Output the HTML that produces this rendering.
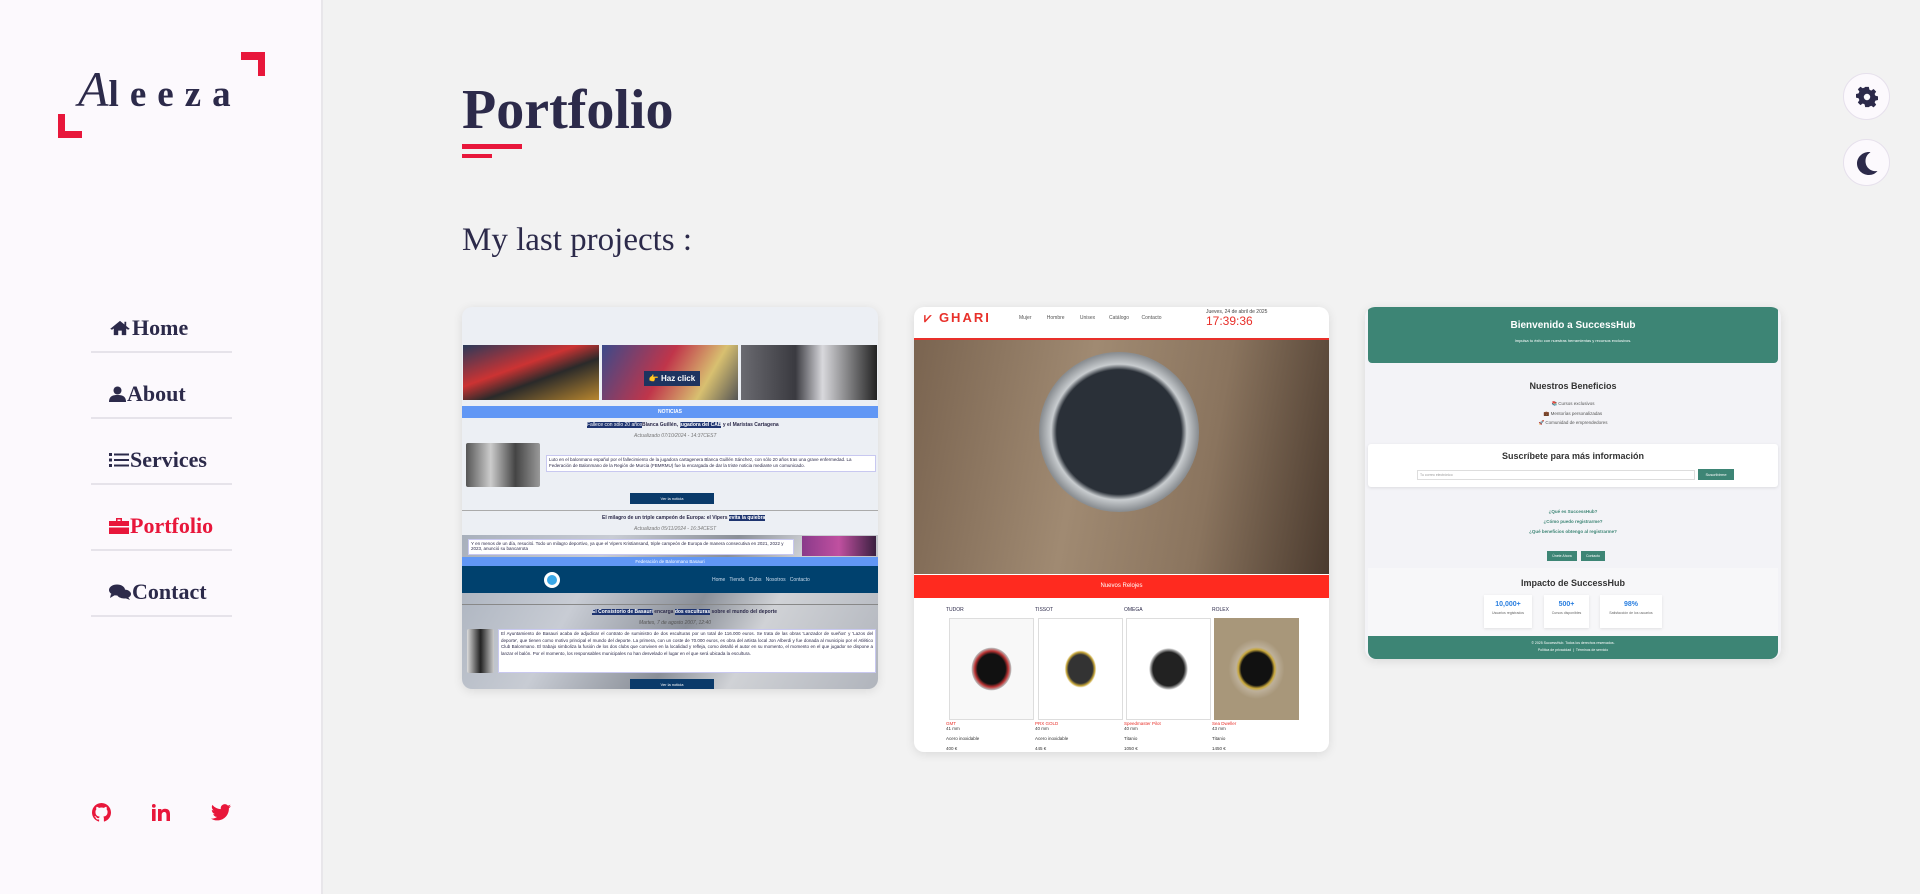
<!DOCTYPE html>
<html><head><meta charset="utf-8">
<style>
*{margin:0;padding:0;box-sizing:border-box}
body{width:1920px;height:894px;overflow:hidden;background:#f2f2f2;font-family:"Liberation Sans",sans-serif;position:relative;color:#2c2a4a}
.side{position:absolute;left:0;top:0;width:323px;height:894px;background:#fcf9fd;border-right:2px solid #e8e6ea}
.br{position:absolute;background:#e8173b}
.logo{position:absolute;left:78px;top:64px;height:50px;font-family:"Liberation Serif",serif;color:#2c2a4a;font-size:37px;font-weight:bold;letter-spacing:11px;white-space:nowrap;line-height:50px}
.logo i{font-weight:normal;font-size:50px;letter-spacing:0;margin-right:0}
.nav{position:absolute;left:91px;width:141px;height:66px;border-bottom:2px solid #e6e3ea;font-family:"Liberation Serif",serif;font-weight:bold;font-size:22px;color:#2c2a4a}
.nav span{position:absolute;left:18px;bottom:10px;display:flex;align-items:center;gap:1px;white-space:nowrap}
.nav svg{fill:currentColor}
h1{position:absolute;left:462px;top:78px;font-family:"Liberation Serif",serif;font-size:56px;font-weight:bold;color:#2c2a4a}
.bar{position:absolute;background:#e8173b;left:462px}
.sub{position:absolute;left:462px;top:222px;font-family:"Liberation Serif",serif;font-size:33px;color:#2c2a4a}
.circ{position:absolute;left:1843px;width:47px;height:47px;border-radius:50%;background:#fcf9fd;border:1px solid #e6e0ec;display:flex;align-items:center;justify-content:center}
.card{position:absolute;top:307px;border-radius:10px;overflow:hidden;box-shadow:0 2px 10px rgba(0,0,0,.1)}
.t{position:absolute;font-size:5px;white-space:nowrap}
</style></head><body>
<div class="side">
  <div class="br" style="left:241px;top:52px;width:24px;height:8px"></div>
  <div class="br" style="left:258px;top:52px;width:7px;height:24px"></div>
  <div class="br" style="left:58px;top:114px;width:7px;height:24px"></div>
  <div class="br" style="left:58px;top:131px;width:24px;height:7px"></div>
  <div class="logo"><i>A</i>leeza</div>

  <div class="nav" style="top:287px"><span><svg width="22" height="16" viewBox="0 0 24 18"><path d="M12 1 L1 10 L3 11 L5 9.5 V17 H10 V12 H14 V17 H19 V9.5 L21 11 L23 10 L19 6.7 V2 H17 V5 Z"/></svg>Home</span></div>
  <div class="nav" style="top:353px"><span><svg width="17" height="16" viewBox="0 0 17 16"><circle cx="8.5" cy="4.5" r="4"/><path d="M0 16 C0 10 4 9 8.5 9 C13 9 17 10 17 16Z"/></svg>About</span></div>
  <div class="nav" style="top:419px"><span><svg width="20" height="14" viewBox="0 0 20 14"><rect x="0" y="0" width="3" height="3"/><rect x="0" y="5.5" width="3" height="3"/><rect x="0" y="11" width="3" height="3"/><rect x="5" y=".5" width="15" height="2"/><rect x="5" y="6" width="15" height="2"/><rect x="5" y="11.5" width="15" height="2"/></svg>Services</span></div>
  <div class="nav" style="top:485px;color:#e8173b"><span><svg width="20" height="16" viewBox="0 0 20 16"><path d="M7 0 H13 V3 H20 V16 H0 V3 H7 Z M8.5 1.5 V3 H11.5 V1.5Z"/><rect x="0" y="8" width="20" height="1.5" fill="#fcf9fd"/></svg>Portfolio</span></div>
  <div class="nav" style="top:551px"><span><svg width="22" height="16" viewBox="0 0 22 16"><ellipse cx="8" cy="6" rx="8" ry="5.5"/><path d="M2 10 L1 14 L6 11Z"/><ellipse cx="15" cy="10" rx="7" ry="4.5"/><path d="M19 13 L21 16 L16 14Z"/></svg>Contact</span></div>

  <svg style="position:absolute;left:92px;top:803px" width="19" height="19" viewBox="0 0 16 16" fill="#e8173b"><path d="M8 0C3.6 0 0 3.6 0 8c0 3.5 2.3 6.5 5.5 7.6.4.1.5-.2.5-.4v-1.4c-2.2.5-2.7-1-2.7-1-.4-.9-.9-1.2-.9-1.2-.7-.5.1-.5.1-.5.8.1 1.2.8 1.2.8.7 1.2 1.9.9 2.3.7.1-.5.3-.9.5-1.1-1.8-.2-3.6-.9-3.6-4 0-.9.3-1.6.8-2.1-.1-.2-.4-1 .1-2.1 0 0 .7-.2 2.2.8.6-.2 1.3-.3 2-.3s1.4.1 2 .3c1.5-1 2.2-.8 2.2-.8.4 1.1.2 1.900.1 2.1.5.6.8 1.3.8 2.1 0 3.1-1.9 3.8-3.6 4 .3.3.5.8.5 1.5v2.2c0 .2.1.5.6.4C13.7 14.5 16 11.5 16 8c0-4.4-3.6-8-8-8z"/></svg>
  <svg style="position:absolute;left:152px;top:804px" width="18" height="17" viewBox="0 0 18 17" fill="#e8173b"><rect x="0" y="5" width="3.6" height="12"/><circle cx="1.8" cy="1.9" r="1.9"/><path d="M6 5 H9.4 V6.7 C10 5.6 11.3 4.8 13 4.8 C16.4 4.8 18 6.7 18 10.3 V17 H14.5 V11 C14.5 9.2 13.9 8 12.3 8 C10.6 8 9.7 9.2 9.7 11 V17 H6Z"/></svg>
  <svg style="position:absolute;left:211px;top:804px" width="20" height="17" viewBox="0 0 24 20" fill="#e8173b"><path d="M24 2.4c-.9.4-1.8.6-2.8.8 1-.6 1.8-1.6 2.200-2.700-1 .6-2 1-3.1 1.2C19.3.7 18 0 16.6 0c-2.7 0-4.9 2.2-4.9 4.9 0 .4 0 .8.1 1.1C7.7 5.8 4.1 3.9 1.7.9c-.4.7-.7 1.6-.7 2.5 0 1.7.9 3.2 2.2 4.1-.8 0-1.6-.2-2.2-.6v.1c0 2.4 1.7 4.4 3.9 4.8-.4.1-.8.2-1.3.2-.3 0-.6 0-.9-.1.6 2 2.4 3.4 4.6 3.4-1.7 1.3-3.8 2.1-6.1 2.1-.4 0-.8 0-1.2-.1 2.2 1.4 4.8 2.2 7.5 2.200 9.1 0 14-7.5 14-14v-.6c1-.7 1.8-1.6 2.5-2.5z"/></svg>
</div>

<h1>Portfolio</h1>
<div class="bar" style="top:144px;width:60px;height:5px"></div>
<div class="bar" style="top:154px;width:30px;height:4px"></div>
<div class="sub">My last projects :</div>

<div class="circ" style="top:73px"><svg width="22" height="22" viewBox="0 0 24 24"><path fill="#2c2a4a" fill-rule="evenodd" d="M10 1h4l.6 3 2 1 2.6-1.7 2.8 2.8L20.3 8.7l.9 2 2.8.6v4l-2.8.6-.9 2 1.7 2.6-2.8 2.8-2.6-1.7-2 .9L14 23h-4l-.6-3-2-.9-2.6 1.7L2 18l1.7-2.6-.9-2L0 12.7v-4l2.8-.6.9-2L2 3.6 4.8.8 7.4 2.5l2-.9z M12 8.5a3.5 3.5 0 1 0 0 7 3.5 3.5 0 1 0 0-7z"/></svg></div>
<div class="circ" style="top:139px"><svg width="22" height="24" viewBox="0 0 22 24"><path fill="#2c2a4a" d="M13 1C6.5 1 1 6 1 12.5S6.5 24 13 24c3.5 0 6.5-1.5 8.5-4-6.5 1-12-3.5-12-10C9.5 6 11.5 3 14.5 1.2 14 1 13.5 1 13 1z"/></svg></div>

<!-- Card 1 -->
<div class="card" style="left:462px;width:416px;height:382px;background:#eceff4">
  <div style="position:absolute;left:1px;top:38px;width:136px;height:55px;background:linear-gradient(160deg,#2a3a5a,#c33 40%,#2a2a2a 60%,#b8862e)"></div>
  <div style="position:absolute;left:140px;top:38px;width:136px;height:55px;background:linear-gradient(120deg,#3c4a8a,#c0354a 45%,#d8c070 75%,#555)"></div>
  <div style="position:absolute;left:279px;top:38px;width:136px;height:55px;background:linear-gradient(90deg,#6a6a70,#3a3a40 40%,#d8d8dc 60%,#222)"></div>
  <div style="position:absolute;left:182px;top:64px;width:56px;height:15px;background:#1e3460;color:#fff;font-size:8px;font-weight:bold;text-align:center;line-height:15px">👉 Haz click</div>
  <div style="position:absolute;left:0;top:99px;width:416px;height:12px;background:#6197f5;color:#fff;font-size:5px;font-weight:bold;text-align:center;line-height:12px">NOTICIAS</div>
  <div class="t" style="left:125px;top:115px;background:#1e3470;color:#fff">Fallece con sólo 20 años</div>
  <div class="t" style="left:180px;top:115px;font-weight:bold">Blanca Guillén, <span style="background:#1e3470;color:#fff">jugadora del CAB</span> y el Maristas Cartagena</div>
  <div class="t" style="left:172px;top:126px;color:#777;font-style:italic">Actualizado 07/10/2024 - 14:37CEST</div>
  <div style="position:absolute;left:4px;top:136px;width:74px;height:44px;background:linear-gradient(90deg,#555,#ccc,#444,#999);border-radius:2px"></div>
  <div style="position:absolute;left:84px;top:148px;width:330px;height:17px;background:#fff;border:1px solid #c8c8f0;font-size:4.5px;line-height:6px;padding:1px 2px;overflow:hidden">Luto en el balonmano español por el fallecimiento de la jugadora cartagenera Blanca Guillén Sánchez, con sólo 20 años tras una grave enfermedad. La Federación de Balonmano de la Región de Murcia (FBMRMU) fue la encargada de dar la triste noticia mediante un comunicado.</div>
  <div style="position:absolute;left:168px;top:186px;width:84px;height:11px;background:#0a3a6a;color:#fff;font-size:4px;text-align:center;line-height:11px">Ver la noticia</div>
  <div style="position:absolute;left:0;top:203px;width:416px;height:1px;background:#aaa"></div>
  <div class="t" style="left:140px;top:208px;font-weight:bold">El milagro de un triple campeón de Europa: el Vipers <span style="background:#1e3470;color:#fff">evita la quiebra</span></div>
  <div class="t" style="left:172px;top:219px;color:#777;font-style:italic">Actualizado 05/11/2024 - 16:34CEST</div>
  <div style="position:absolute;left:0;top:228px;width:416px;height:154px;background:linear-gradient(120deg,#a8b0bc,#c8ccd4 30%,#8a8f98 55%,#d0d2d6 70%,#b0b4bc)"></div>
  <div style="position:absolute;left:6px;top:232px;width:326px;height:16px;background:#fff;border:1px solid #c8c8f0;font-size:4.5px;padding:1px 2px;overflow:hidden">Y en menos de un día, resucitó. Todo un milagro deportivo, ya que el Vipers Kristiansand, triple campeón de Europa de manera consecutiva en 2021, 2022 y 2023, anunció su bancarrota</div>
  <div style="position:absolute;left:340px;top:229px;width:74px;height:20px;background:linear-gradient(90deg,#8a3a8a,#c050a0,#3a2040)"></div>
  <div style="position:absolute;left:0;top:250px;width:416px;height:9px;background:#6197f5;color:#fff;font-size:4.5px;text-align:center;line-height:9px">Federación de Balonmano Basauri</div>
  <div style="position:absolute;left:0;top:259px;width:416px;height:27px;background:#00416e"></div>
  <div style="position:absolute;left:82px;top:265px;width:16px;height:16px;border-radius:50%;background:#3aa8e8;border:3px solid #fff"></div>
  <div class="t" style="left:250px;top:270px;color:#cde">Home &nbsp; Tienda &nbsp; Clubs &nbsp; Nosotros &nbsp; Contacto</div>
  <div style="position:absolute;left:0;top:297px;width:416px;height:1px;background:#888"></div>
  <div class="t" style="left:130px;top:302px;font-weight:bold"><span style="background:#1e3470;color:#fff">El Consistorio de Basauri</span> encarga <span style="background:#1e3470;color:#fff">dos esculturas</span> sobre el mundo del deporte</div>
  <div class="t" style="left:177px;top:313px;color:#555;font-style:italic">Martes, 7 de agosto 2007, 12:40</div>
  <div style="position:absolute;left:5px;top:322px;width:27px;height:44px;background:linear-gradient(90deg,#ddd,#222,#ccc);border-radius:2px"></div>
  <div style="position:absolute;left:36px;top:322px;width:378px;height:44px;background:#fff;border:1px solid #c8c8f0;font-size:4.5px;line-height:6.5px;padding:1px 2px;overflow:hidden;text-align:justify">El Ayuntamiento de Basauri acaba de adjudicar el contrato de suministro de dos esculturas por un total de 116.000 euros. Se trata de las obras 'Lanzador de sueños' y 'Lazos del deporte', que tienen como motivo principal el mundo del deporte. La primera, con un coste de 70.000 euros, es obra del artista local Jon Alberdi y fue donada al municipio por el Atlético Club Balonmano. El trabajo simboliza la fusión de los dos clubs que conviven en la localidad y refleja, como detalló el autor en su momento, el momento en el que jugador se dispone a lanzar el balón. Por el momento, los responsables municipales no han desvelado el lugar en el que será ubicada la escultura.</div>
  <div style="position:absolute;left:168px;top:372px;width:84px;height:11px;background:#0a3a6a;color:#fff;font-size:4px;text-align:center;line-height:11px">Ver la noticia</div>
</div>

<!-- Card 2 -->
<div class="card" style="left:914px;width:415px;height:445px;background:#fff">
  <div style="position:absolute;left:10px;top:3px;font-size:13px;color:#e8302a;font-weight:bold;letter-spacing:2px">⩗ GHARI</div>
  <div class="t" style="left:105px;top:8px;color:#555;font-size:5px">Mujer &nbsp;&nbsp;&nbsp;&nbsp;&nbsp;&nbsp;&nbsp;&nbsp;&nbsp; Hombre &nbsp;&nbsp;&nbsp;&nbsp;&nbsp;&nbsp;&nbsp;&nbsp;&nbsp; Unisex &nbsp;&nbsp;&nbsp;&nbsp;&nbsp;&nbsp;&nbsp;&nbsp; Catálogo &nbsp;&nbsp;&nbsp;&nbsp;&nbsp;&nbsp;&nbsp; Contacto</div>
  <div class="t" style="left:292px;top:2px;color:#444">Jueves, 24 de abril de 2025</div>
  <div style="position:absolute;left:292px;top:7px;font-size:12px;color:#e8302a">17:39:36</div>
  <div style="position:absolute;left:0;top:31px;width:415px;height:2px;background:#e8302a"></div>
  <div style="position:absolute;left:0;top:33px;width:415px;height:234px;background:linear-gradient(100deg,#7a6450,#a08a72 40%,#8a745e 70%,#4a3a2e)"></div>
  <div style="position:absolute;left:125px;top:45px;width:160px;height:160px;border-radius:50%;background:radial-gradient(circle,#2a3038 55%,#c8cccf 60%,#8a8e92 70%)"></div>
  <div style="position:absolute;left:0;top:268px;width:415px;height:23px;background:#ff2a1f;color:#fff;font-size:6px;text-align:center;line-height:23px">Nuevos Relojes</div>
  <div class="t" style="left:32px;top:300px">TUDOR</div><div class="t" style="left:121px;top:300px">TISSOT</div><div class="t" style="left:210px;top:300px">OMEGA</div><div class="t" style="left:298px;top:300px">ROLEX</div>
  <div style="position:absolute;left:35px;top:311px;width:85px;height:102px;background:radial-gradient(ellipse 28px 30px,#111 50%,#b33 60%,#bbb 70%,#f8f8f8 72%);border:1px solid #ddd"></div>
  <div style="position:absolute;left:124px;top:311px;width:85px;height:102px;background:radial-gradient(ellipse 22px 26px,#333 55%,#c9a83a 65%,#fff 72%);border:1px solid #ddd"></div>
  <div style="position:absolute;left:212px;top:311px;width:85px;height:102px;background:radial-gradient(ellipse 26px 28px,#222 60%,#aaa 70%,#fff 75%);border:1px solid #ddd"></div>
  <div style="position:absolute;left:300px;top:311px;width:85px;height:102px;background:radial-gradient(ellipse 28px 30px,#111 55%,#c9a83a 65%,#bdb09a 73%,#a8977a)"></div>
  <div class="t" style="left:32px;top:414px;color:#e8302a;font-size:4.5px">GMT<br><span style="color:#333">41 mm<br><br>Acero inoxidable<br><br>400 €</span></div>
  <div class="t" style="left:121px;top:414px;color:#e8302a;font-size:4.5px">PRX GOLD<br><span style="color:#333">40 mm<br><br>Acero inoxidable<br><br>445 €</span></div>
  <div class="t" style="left:210px;top:414px;color:#e8302a;font-size:4.5px">Speedmaster Pilot<br><span style="color:#333">40 mm<br><br>Titanio<br><br>1050 €</span></div>
  <div class="t" style="left:298px;top:414px;color:#e8302a;font-size:4.5px">Sea Dweller<br><span style="color:#333">43 mm<br><br>Titanio<br><br>1450 €</span></div>
</div>

<!-- Card 3 -->
<div class="card" style="left:1365px;width:416px;height:352px;background:#f3f3f7">
  <div style="position:absolute;left:3px;top:0;width:410px;height:56px;background:#3d8575;border-radius:0 0 4px 4px;color:#fff;text-align:center">
    <div style="font-size:10px;font-weight:bold;margin-top:13px">Bienvenido a SuccessHub</div>
    <div style="font-size:4px;margin-top:7px">Impulsa tu éxito con nuestras herramientas y recursos exclusivos.</div>
  </div>
  <div style="position:absolute;left:0;top:74px;width:416px;text-align:center;font-size:9px;font-weight:bold;color:#333">Nuestros Beneficios</div>
  <div style="position:absolute;left:0;top:92px;width:416px;text-align:center;font-size:4.5px;color:#555;line-height:9.5px">📚 Cursos exclusivos<br>💼 Mentorías personalizadas<br>🚀 Comunidad de emprendedores</div>
  <div style="position:absolute;left:3px;top:137px;width:410px;height:43px;background:#fff;border-radius:3px;box-shadow:0 1px 3px rgba(0,0,0,.1)">
    <div style="text-align:center;font-size:9px;font-weight:bold;color:#333;margin-top:7px">Suscríbete para más información</div>
    <div style="position:absolute;left:49px;top:26px;width:278px;height:10px;border:1px solid #ddd;font-size:3.5px;color:#999;padding:2px">Tu correo electrónico</div>
    <div style="position:absolute;left:330px;top:25px;width:36px;height:11px;background:#3d8575;color:#fff;font-size:4px;text-align:center;line-height:11px">Suscribirme</div>
  </div>
  <div style="position:absolute;left:0;top:200px;width:416px;text-align:center;font-size:4.5px;font-weight:bold;color:#3d8575;line-height:10px">¿Qué es SuccessHub?<br>¿Cómo puedo registrarme?<br>¿Qué beneficios obtengo al registrarme?</div>
  <div style="position:absolute;left:182px;top:244px;width:30px;height:10px;background:#3d8575;color:#fff;font-size:3.5px;text-align:center;line-height:10px">Únete Ahora</div>
  <div style="position:absolute;left:216px;top:244px;width:24px;height:10px;background:#3d8575;color:#fff;font-size:3.5px;text-align:center;line-height:10px">Contacto</div>
  <div style="position:absolute;left:3px;top:261px;width:410px;height:70px;background:#f7f7f9"></div>
  <div style="position:absolute;left:0;top:271px;width:416px;text-align:center;font-size:9px;font-weight:bold;color:#333">Impacto de SuccessHub</div>
  <div style="position:absolute;left:119px;top:288px;width:48px;height:33px;background:#fff;box-shadow:0 1px 3px rgba(0,0,0,.1);text-align:center"><div style="color:#2a7fe0;font-size:7px;font-weight:bold;margin-top:6px">10,000+</div><div style="font-size:3.5px;color:#666;margin-top:3px">Usuarios registrados</div></div>
  <div style="position:absolute;left:179px;top:288px;width:45px;height:33px;background:#fff;box-shadow:0 1px 3px rgba(0,0,0,.1);text-align:center"><div style="color:#2a7fe0;font-size:7px;font-weight:bold;margin-top:6px">500+</div><div style="font-size:3.5px;color:#666;margin-top:3px">Cursos disponibles</div></div>
  <div style="position:absolute;left:235px;top:288px;width:62px;height:33px;background:#fff;box-shadow:0 1px 3px rgba(0,0,0,.1);text-align:center"><div style="color:#2a7fe0;font-size:7px;font-weight:bold;margin-top:6px">98%</div><div style="font-size:3.5px;color:#666;margin-top:3px">Satisfacción de los usuarios</div></div>
  <div style="position:absolute;left:3px;top:329px;width:410px;height:23px;background:#3d8575;border-radius:0 0 8px 8px;color:#fff;text-align:center;font-size:3.5px;line-height:7px;padding-top:4px">© 2025 SuccessHub. Todos los derechos reservados.<br>Política de privacidad &nbsp;|&nbsp; Términos de servicio</div>
</div>
</body></html>
